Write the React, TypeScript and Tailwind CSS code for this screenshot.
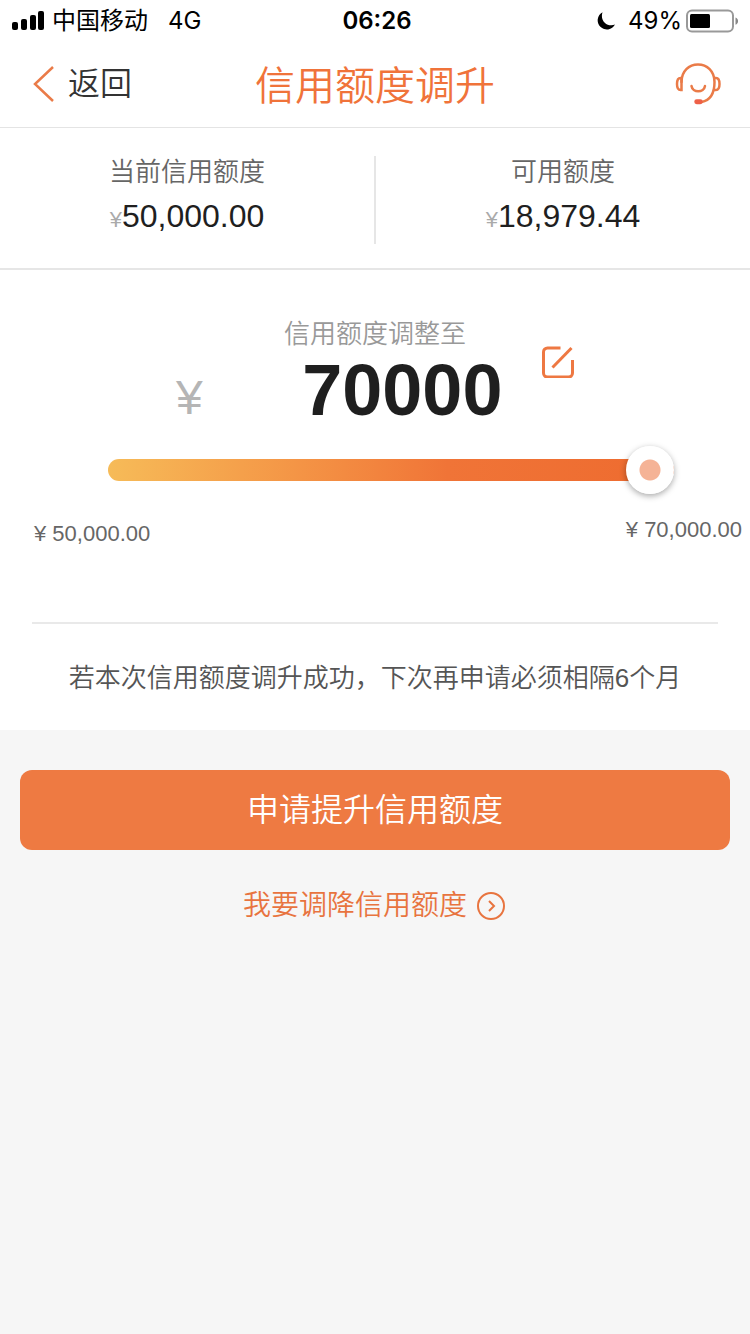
import { useRef, useState } from 'react';

const MIN_LIMIT = 50000;
const MAX_LIMIT = 70000;

type StatProps = {
  label: string;
  amount: number;
};

function formatAmount(value: number) {
  return value.toLocaleString('en-US', { minimumFractionDigits: 2 });
}

function StatusBar() {
  return (
    <div className="grid h-10 grid-cols-[1fr_auto_1fr] items-center bg-white px-3 pt-0.5 font-[Inter,'Noto_Sans_CJK_SC',sans-serif] text-2xl text-black">
      <div className="flex items-center gap-2">
        <svg className="h-5 w-8" viewBox="0 0 32 20" fill="currentColor" aria-hidden="true">
          <rect x="0" y="11" width="6" height="8" rx="2" />
          <rect x="9" y="8" width="6" height="11" rx="2" />
          <rect x="18" y="4" width="6" height="15" rx="2" />
          <rect x="26" y="0" width="6" height="19" rx="2" />
        </svg>
        <span>中国移动</span>
        <span className="ml-3">4G</span>
      </div>
      <span className="pl-1 font-semibold">06:26</span>
      <div className="flex items-center justify-end gap-1">
        <svg className="mr-2 h-5 w-5" viewBox="0 0 20 20" fill="currentColor" aria-hidden="true">
          <path d="M6.5 1.2A9.2 9.2 0 1 0 19 13.6C12 16.5 3.5 10.5 6.5 1.2Z" />
        </svg>
        <span>49%</span>
        <svg className="h-6 w-13" viewBox="0 0 52 24" aria-hidden="true">
          <rect x="1" y="1.5" width="46" height="21" rx="5" fill="none" stroke="#999" strokeWidth="2" />
          <rect x="4" y="5" width="20" height="14" rx="1.5" fill="#000" />
          <path d="M49.5 8.5c3.4 1.2 3.4 6 0 7.2Z" fill="#888" />
        </svg>
      </div>
    </div>
  );
}

function Header() {
  return (
    <header className="grid h-22 grid-cols-[1fr_auto_1fr] items-center border-b border-[#e4e4e4] bg-white px-7">
      <button type="button" className="flex items-center gap-3 justify-self-start text-[32px] leading-10 font-[350] text-[#333]">
        <svg className="h-9 w-7" viewBox="0 0 28 36" fill="none" stroke="#ea7b48" strokeWidth="2.5" aria-hidden="true">
          <path d="M25 1 7 18l18 17" />
        </svg>
        返回
      </button>
      <h1 className="pt-1 text-[40px] leading-12 font-[350] text-[#f0733a]">信用额度调升</h1>
      <button type="button" aria-label="客服" className="justify-self-end">
        <svg className="h-11 w-12" viewBox="0 0 48 44" fill="none" stroke="#ea7b48" strokeWidth="2.5" strokeLinecap="round" aria-hidden="true">
          <path d="M7.5 20C7.5 9 15 2.5 24 2.5S40.5 9 40.5 20c0 12-5 18.5-13 20" />
          <path d="M7.5 16v12h-1C4 28 3 25.800 3 22s1-6 3.500-6h1ZM40.500 16h1.500c2.500 0 3.500 2.200 3.500 6s-1 6-3.500 6h-2" />
          <path d="M17.500 24c1 7 12.500 7 13.500 0" />
          <rect x="21" y="38" width="7" height="3.5" rx="1.7" fill="#ee6048" stroke="#ee6048" strokeWidth="1.5" />
        </svg>
      </button>
    </header>
  );
}

function Stat({ label, amount }: StatProps) {
  return (
    <div className="flex flex-1 flex-col items-center gap-1">
      <p className="text-[26px] leading-10 font-[350] text-[#666]">{label}</p>
      <p className="text-[32px] leading-10 text-[#1f1f1f]">
        <span className="text-[22px] text-[#aaa]">¥</span>
        {formatAmount(amount)}
      </p>
    </div>
  );
}

function LimitEditor() {
  const [limit, setLimit] = useState(MAX_LIMIT);
  const inputRef = useRef<HTMLInputElement>(null);

  return (
    <section className="flex flex-col bg-white px-8 pt-11 pb-8">
      <label htmlFor="limit" className="self-center text-[26px] leading-10 font-[350] text-[#999]">
        信用额度调整至
      </label>
      <div className="mx-36 flex h-18 justify-between">
        <span className="pt-5 text-5xl text-[#b5b5b5]">¥</span>
        <input
          ref={inputRef}
          id="limit"
          type="text"
          inputMode="numeric"
          value={limit}
          onChange={(e) => setLimit(Number(e.target.value.replace(/\D/g, '')))}
          className="ml-15 w-64 min-w-0 text-center text-7xl leading-none font-bold text-[#1f1f1f] outline-none"
        />
        <button type="button" aria-label="编辑" className="-mt-2 self-start" onClick={() => inputRef.current?.focus()}>
          <svg className="h-8 w-8" viewBox="0 0 32 32" fill="none" stroke="#ee7842" strokeWidth="3" aria-hidden="true">
            <path d="M18.5 2H5.5a4 4 0 0 0-4 4v21a4 4 0 0 0 4 4h21a4 4 0 0 0 4-4V14" />
            <path d="M10.5 21.500 29.500 2" />
          </svg>
        </button>
      </div>
      <input
        type="range"
        aria-label="信用额度调整至"
        min={MIN_LIMIT}
        max={MAX_LIMIT}
        step={1000}
        value={limit}
        onChange={(e) => setLimit(Number(e.target.value))}
        className="mt-5 mr-11 ml-19 h-12 cursor-pointer appearance-none bg-transparent [&::-webkit-slider-runnable-track]:h-[22px] [&::-webkit-slider-runnable-track]:rounded-full [&::-webkit-slider-runnable-track]:bg-linear-to-r [&::-webkit-slider-runnable-track]:from-[#f6bb58] [&::-webkit-slider-runnable-track]:via-[#f07437] [&::-webkit-slider-runnable-track]:via-60% [&::-webkit-slider-runnable-track]:to-[#ee6b2f] [&::-webkit-slider-thumb]:-mt-[13px] [&::-webkit-slider-thumb]:size-12 [&::-webkit-slider-thumb]:appearance-none [&::-webkit-slider-thumb]:rounded-full [&::-webkit-slider-thumb]:bg-[radial-gradient(circle,#f5b396_10px,#fff_11px)] [&::-webkit-slider-thumb]:shadow-[0_2px_6px_rgba(0,0,0,0.35)]"
      />
      <div className="-mr-6 ml-0.5 flex items-start justify-between pt-5 text-[22px] leading-8 text-[#666]">
        <span className="pt-1">¥ {formatAmount(MIN_LIMIT)}</span>
        <span>¥ {formatAmount(MAX_LIMIT)}</span>
      </div>
      <p className="mt-18 border-t-2 border-[#e9e9e9] pt-[34px] text-center text-[26px] leading-10 font-[350] text-[#555]">
        若本次信用额度调升成功，下次再申请必须相隔6个月
      </p>
    </section>
  );
}

export default function App() {
  return (
    <div className="min-h-screen bg-[#f6f6f6] font-['Liberation_Sans','Noto_Sans_CJK_SC',sans-serif]">
      <StatusBar />
      <Header />
      <main>
        <section className="flex items-start border-b-2 border-[#e6e6e6] bg-white pt-6 pb-6">
          <Stat label="当前信用额度" amount={50000} />
          <div className="mt-1 h-22 border-l-2 border-[#e6e6e6]" />
          <Stat label="可用额度" amount={18979.44} />
        </section>
        <LimitEditor />
        <div className="flex flex-col gap-8 px-5 pt-10">
          <button type="button" className="h-20 rounded-xl bg-[#ee7a42] text-[32px] font-[350] text-white">
            申请提升信用额度
          </button>
          <a href="#decrease" className="flex items-center gap-2 self-center text-[28px] leading-12 font-[350] text-[#e8743f]">
            我要调降信用额度
            <svg className="h-8 w-8" viewBox="0 0 32 32" fill="none" stroke="currentColor" strokeWidth="2" aria-hidden="true">
              <circle cx="16" cy="16" r="13" />
              <path d="m14 11 5 5-5 5" />
            </svg>
          </a>
        </div>
      </main>
    </div>
  );
}
